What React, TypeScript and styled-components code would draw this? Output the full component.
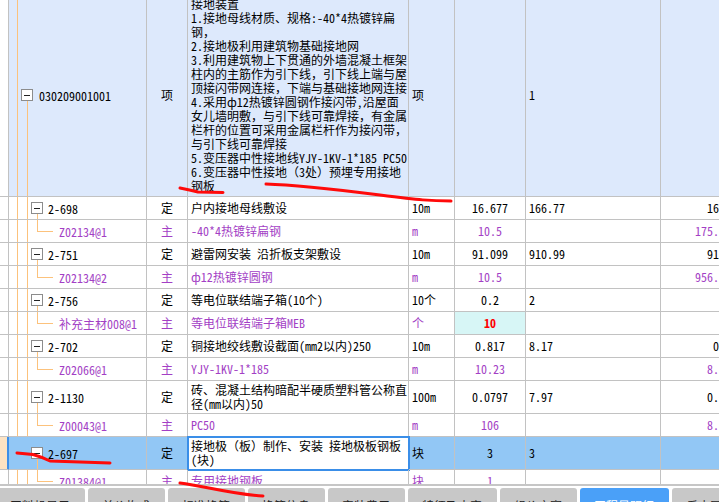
import React from 'react';
import styled, { createGlobalStyle } from 'styled-components';

const ORANGE = '#fcc27c';
const GRID = '#c2c2c2';
const PURPLE = '#a33fc5';
const SEL = '#92c7f5';
const ITEM_BG = '#dde9fc';

const GlobalStyle = createGlobalStyle`
  html, body { margin: 0; padding: 0; background: #fff; overflow: hidden; }
  body {
    font-family: "Noto Sans Mono CJK SC", "Noto Sans CJK SC", monospace;
    font-size: 12px;
    color: #000;
  }
`;

const COLS = '9px 138px 41px 221px 46px 71px 135px 86px';

const Page = styled.div`
  position: relative;
  width: 719px;
  height: 502px;
  overflow: hidden;
  display: flex;
  flex-direction: column;
`;

const Viewport = styled.div`
  flex: none;
  height: 484px;
  overflow: hidden;
  border-bottom: 2px solid #c6c6c6;
`;

const Body = styled.div`
  width: 747px;
  margin-top: -6px;
`;

const Row = styled.div<{ $h: number; $bg: string }>`
  display: grid;
  grid-template-columns: ${COLS};
  height: ${(p) => p.$h}px;
  background: ${(p) => p.$bg};
`;

type Align = 'left' | 'center' | 'right';

const Cell = styled.div<{ $align?: Align; $color?: string; $bg?: string }>`
  box-sizing: border-box;
  min-width: 0;
  border-right: 1px solid ${GRID};
  border-bottom: 1px solid ${GRID};
  padding: 0 3px;
  display: flex;
  flex-direction: column;
  justify-content: center;
  align-items: ${(p) => (p.$align === 'center' ? 'center' : p.$align === 'right' ? 'flex-end' : 'flex-start')};
  overflow: hidden;
  white-space: nowrap;
  line-height: 14px;
  color: ${(p) => p.$color || '#000'};
  background: ${(p) => p.$bg || 'transparent'};
`;

const Marker = styled.div<{ $selected?: boolean }>`
  box-sizing: border-box;
  border-bottom: 1px solid ${GRID};
  border-right: 1px solid ${(p) => (p.$selected ? '#3d8fe8' : GRID)};
  background: ${(p) => (p.$selected ? '#fde3c3' : '#fff')};
  box-shadow: ${(p) => (p.$selected ? 'inset -1px 0 0 #3d8fe8' : 'none')};
`;

type Tree = 'root' | 'parent' | 'child' | 'selParent';

const seg = (x: string, y: string, w: string, h: string) =>
  `linear-gradient(${ORANGE}, ${ORANGE}) ${x} ${y} / ${w} ${h} no-repeat`;

const treeBg: Record<Tree, string> = {
  root: [seg('8px', '0', '1px', '100%'), seg('18px', '100%', '1px', 'calc(50% - 6px)')].join(', '),
  parent: [
    seg('8px', '0', '1px', '100%'),
    seg('18px', '0', '1px', '100%'),
    seg('28px', '100%', '1px', 'calc(50% - 6px)'),
  ].join(', '),
  selParent: seg('28px', '100%', '1px', 'calc(50% - 6px)'),
  child: [
    seg('8px', '0', '1px', '100%'),
    seg('18px', '0', '1px', '100%'),
    seg('28px', '0', '1px', '50%'),
    seg('28px', '50%', '16px', '1px'),
  ].join(', '),
};

const CodeCell = styled.div<{ $tree: Tree; $color: string }>`
  box-sizing: border-box;
  min-width: 0;
  border-right: 1px solid ${GRID};
  border-bottom: 1px solid ${GRID};
  display: flex;
  align-items: center;
  gap: ${(p) => (p.$tree === 'root' ? 6 : 5)}px;
  padding-left: ${(p) => (p.$tree === 'root' ? 12 : p.$tree === 'child' ? 50 : 22)}px;
  white-space: nowrap;
  overflow: hidden;
  color: ${(p) => p.$color};
  background: ${(p) => treeBg[p.$tree]};
`;

const Toggle = styled.span`
  box-sizing: border-box;
  flex: none;
  width: 12px;
  height: 12px;
  border: 1px solid #8c8c8c;
  background: #fff;
  display: flex;
  align-items: center;
  justify-content: center;
  &::after {
    content: '';
    width: 6px;
    height: 1px;
    background: #222;
  }
`;

const NameCell = styled(Cell)<{ $editing?: boolean }>`
  background: ${(p) => (p.$editing ? '#fff' : 'transparent')};
  outline: ${(p) => (p.$editing ? '2px solid #3a8ee8' : 'none')};
  outline-offset: -1px;
`;

const Line = styled.span`
  display: block;
`;

const Hot = styled.span`
  color: #ff0000;
  font-weight: bold;
`;

const TabBar = styled.div`
  flex: none;
  display: flex;
  gap: 3px;
  margin-left: -4.5px;
  padding-top: 2px;
  background: #fff;
`;

const Tab = styled.div<{ $active?: boolean }>`
  flex: none;
  padding: 11px 14.5px 4px;
  line-height: 14px;
  border-radius: 3px 3px 0 0;
  white-space: nowrap;
  background: ${(p) => (p.$active ? '#4aa0f8' : '#c8c8c8')};
  color: ${(p) => (p.$active ? '#fff' : '#222')};
`;

const Scribbles = styled.svg`
  position: absolute;
  left: 0;
  top: 0;
  pointer-events: none;
`;

type RowData = {
  code: string;
  tree: Tree;
  kind: 'item' | 'def' | 'main';
  type: string;
  name: string[];
  unit: string;
  qty?: string;
  amount?: string;
  total?: string;
  h: number;
  selected?: boolean;
  hotQty?: boolean;
};

const rows: RowData[] = [
  {
    code: '030209001001',
    tree: 'root',
    kind: 'item',
    type: '项',
    name: [
      '接地装置',
      '1.接地母线材质、规格:-40*4热镀锌扁',
      '钢，',
      '2.接地极利用建筑物基础接地网',
      '3.利用建筑物上下贯通的外墙混凝土框架',
      '柱内的主筋作为引下线，引下线上端与屋',
      '顶接闪带网连接，下端与基础接地网连接',
      '4.采用ф12热镀锌圆钢作接闪带,沿屋面',
      '女儿墙明敷，与引下线可靠焊接，有金属',
      '栏杆的位置可采用金属栏杆作为接闪带，',
      '与引下线可靠焊接',
      '5.变压器中性接地线YJY-1KV-1*185 PC50',
      '6.变压器中性接地（3处）预埋专用接地',
      '钢板',
    ],
    unit: '项',
    amount: '1',
    h: 203,
  },
  { code: '2-698', tree: 'parent', kind: 'def', type: '定', name: ['户内接地母线敷设'], unit: '10m', qty: '16.677', amount: '166.77', total: '166.77', h: 23 },
  { code: 'Z02134@1', tree: 'child', kind: 'main', type: '主', name: ['-40*4热镀锌扁钢'], unit: 'm', qty: '10.5', total: '175.1085', h: 23 },
  { code: '2-751', tree: 'parent', kind: 'def', type: '定', name: ['避雷网安装 沿折板支架敷设'], unit: '10m', qty: '91.099', amount: '910.99', total: '910.99', h: 23 },
  { code: 'Z02134@2', tree: 'child', kind: 'main', type: '主', name: ['ф12热镀锌圆钢'], unit: 'm', qty: '10.5', total: '956.5395', h: 23 },
  { code: '2-756', tree: 'parent', kind: 'def', type: '定', name: ['等电位联结端子箱(10个)'], unit: '10个', qty: '0.2', amount: '2', total: '2', h: 23 },
  { code: '补充主材008@1', tree: 'child', kind: 'main', type: '主', name: ['等电位联结端子箱MEB'], unit: '个', qty: '10', total: '20', h: 23, hotQty: true },
  { code: '2-702', tree: 'parent', kind: 'def', type: '定', name: ['铜接地绞线敷设截面(mm2以内)250'], unit: '10m', qty: '0.817', amount: '8.17', total: '0.817', h: 23 },
  { code: 'Z02066@1', tree: 'child', kind: 'main', type: '主', name: ['YJY-1KV-1*185'], unit: 'm', qty: '10.23', total: '8.3579', h: 23 },
  { code: '2-1130', tree: 'parent', kind: 'def', type: '定', name: ['砖、混凝土结构暗配半硬质塑料管公称直', '径(mm以内)50'], unit: '100m', qty: '0.0797', amount: '7.97', total: '0.0797', h: 33 },
  { code: 'Z00043@1', tree: 'child', kind: 'main', type: '主', name: ['PC50'], unit: 'm', qty: '106', total: '8.4482', h: 23 },
  { code: '2-697', tree: 'selParent', kind: 'def', type: '定', name: ['接地极（板）制作、安装 接地极板钢板', '(块)'], unit: '块', qty: '3', amount: '3', total: '3', h: 33, selected: true },
  { code: 'Z01384@1', tree: 'child', kind: 'main', type: '主', name: ['专用接地钢板'], unit: '块', qty: '1', total: '3', h: 23 },
];

const tabs = ['工料机显示', '单价构成', '标准换算', '换算信息', '安装费用', '特征及内容', '组价方案', '工程量明细', '反查图形工程量', '说明信息'];

function GridRow({ r }: { r: RowData }) {
  const color = r.kind === 'main' ? PURPLE : '#000';
  const bg = r.selected ? SEL : r.kind === 'item' ? ITEM_BG : '#fff';
  return (
    <Row $h={r.h} $bg={bg}>
      <Marker $selected={r.selected} />
      <CodeCell $tree={r.tree} $color={color}>
        {r.tree !== 'child' && <Toggle />}
        <span>{r.code}</span>
      </CodeCell>
      <Cell $align="center" $color={color}>{r.type}</Cell>
      <NameCell $color={color} $editing={r.selected}>
        {r.name.map((l, i) => (
          <Line key={i}>{l}</Line>
        ))}
      </NameCell>
      <Cell $color={color}>{r.unit}</Cell>
      <Cell $align="center" $color={color} $bg={r.hotQty ? '#d7f6f6' : undefined}>
        {r.hotQty ? <Hot>{r.qty}</Hot> : r.qty}
      </Cell>
      <Cell $color={color}>{r.amount}</Cell>
      <Cell $align="right" $color={color}>{r.total}</Cell>
    </Row>
  );
}

export default function App() {
  return (
    <Page>
      <GlobalStyle />
      <Viewport>
        <Body>
          {rows.map((r) => (
            <GridRow key={r.code} r={r} />
          ))}
        </Body>
      </Viewport>
      <TabBar>
        {tabs.map((t) => (
          <Tab key={t} $active={t === '工程量明细'}>
            {t}
          </Tab>
        ))}
      </TabBar>
      <Scribbles width="719" height="502" viewBox="0 0 719 502">
        <g fill="none" stroke="#ff0a0a" strokeWidth="3" strokeLinecap="round" strokeLinejoin="round">
          <path d="M180,188 Q190,190 198,192 L223,192.5" />
          <path d="M266,184 C300,185 340,190 380,195 S430,201 451,201" />
          <path d="M17,453 L33,454.5 Q42,457 50,461 L110,463" />
          <path d="M180,483 C205,486 230,494 263,496" />
        </g>
      </Scribbles>
    </Page>
  );
}
